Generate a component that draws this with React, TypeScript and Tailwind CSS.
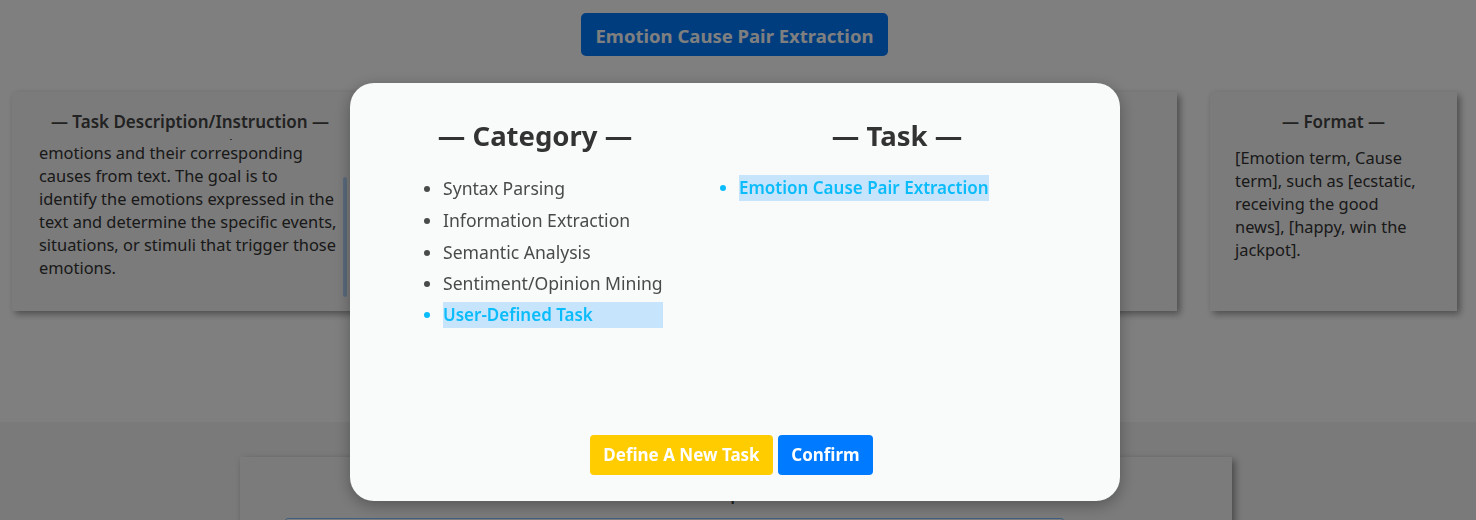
import React from 'react';

const categories = [
  'Syntax Parsing',
  'Information Extraction',
  'Semantic Analysis',
  'Sentiment/Opinion Mining',
  'User-Defined Task',
];

const tasks = ['Emotion Cause Pair Extraction'];

function ChoiceList({ items, selected }: { items: string[]; selected: string }) {
  return (
    <ul className="w-fit list-disc space-y-[5.75px] pl-[40px] text-[17.6px] leading-[26px]">
      {items.map((item) => (
        <li
          key={item}
          className={
            item === selected
              ? 'bg-[#c6e4fc] text-[17px] font-semibold text-[#0bbcfb]'
              : 'text-[#4a4a4a] marker:text-[#4a4a4a]'
          }
        >
          {item}
        </li>
      ))}
    </ul>
  );
}

export default function App() {
  return (
    <div className="relative min-h-screen bg-white font-['Noto_Sans',sans-serif] text-[#333]">
      <div className="flex justify-center pr-[7px] pt-[13px]">
        <button className="h-[43px] w-[307px] rounded-[5px] bg-[#007bff] pt-[3px] text-[18.5px] font-bold text-white">
          Emotion Cause Pair Extraction
        </button>
      </div>

      <div className="mt-[36px] flex gap-[33px] pl-[12px]">
        <div className="h-[219px] w-[356px] bg-[#f6f6f6] pt-[18px] shadow-[3px_3px_7px_rgba(0,0,0,0.4)]">
          <h3 className="text-center text-[17px] font-semibold leading-[24px] text-[#444]">
            — Task Description/Instruction —
          </h3>
          <div className="mt-[5px] flex h-[159px] overflow-hidden pl-[27px] pr-[21px]">
            <p className="-mt-[21px] w-[299px] shrink-0 text-[16.4px] leading-[23px] text-[#333]">
              This task aims to extract pairs of emotions and their corresponding causes from text. The goal is to
              identify the emotions expressed in the text and determine the specific events, situations, or stimuli
              that trigger those emotions.
            </p>
            <div className="ml-auto mt-[38px] h-[120px] w-[4px] rounded-full bg-[#b3d4f6]" />
          </div>
        </div>

        <div className="h-[219px] w-[776px] bg-[#f6f6f6] shadow-[3px_3px_7px_rgba(0,0,0,0.4)]" />

        <div className="h-[219px] w-[247px] bg-[#f6f6f6] px-[25px] pt-[18px] shadow-[3px_3px_7px_rgba(0,0,0,0.4)]">
          <h3 className="text-center text-[17px] font-semibold leading-[24px] text-[#444]">— Format —</h3>
          <p className="mt-[12px] w-[190px] text-[16.4px] leading-[23px] text-[#333]">
            [Emotion term, Cause term], such as [ecstatic, receiving the good news], [happy, win the jackpot].
          </p>
        </div>
      </div>

      <div className="mt-[111px] h-[98px] bg-[#f4f4f4] pl-[240px] pt-[35px]">
        <div className="h-[120px] w-[992px] bg-[#f6f6f6] pt-[25px] shadow-[3px_3px_7px_rgba(0,0,0,0.4)]">
          <h3 className="text-center text-[17px] font-semibold leading-[24px] text-[#444]">— Input —</h3>
          <div className="ml-[45px] mt-[12px] h-[40px] w-[779px] rounded-[3px] border border-[#80bdff] bg-white" />
        </div>
      </div>

      <div className="fixed inset-0 bg-black/50 pl-[350px] pt-[83px]">
        <div className="flex h-[418px] w-[770px] flex-col rounded-[24px] bg-[#f9fbfb] pb-[26px] pt-[35px] shadow-[0_4px_16px_rgba(0,0,0,0.3)]">
          <div className="flex gap-[32px] pl-[53px]">
            <div className="w-[264px]">
              <h2 className="text-center text-[27.5px] font-bold leading-[36px] text-[#333]">— Category —</h2>
              <div className="mt-[21px]">
                <ChoiceList items={categories} selected="User-Defined Task" />
              </div>
            </div>
            <div className="w-[396px]">
              <h2 className="text-center text-[27.5px] font-bold leading-[36px] text-[#333]">— Task —</h2>
              <div className="mt-[21px]">
                <ChoiceList items={tasks} selected="Emotion Cause Pair Extraction" />
              </div>
            </div>
          </div>

          <div className="mt-auto flex gap-[5px] pl-[240px]">
            <button className="h-[40px] w-[183px] rounded-[4px] bg-[#ffcc00] text-[17px] font-bold text-white">
              Define A New Task
            </button>
            <button className="h-[40px] w-[95px] rounded-[4px] bg-[#007bff] text-[17px] font-bold text-white">
              Confirm
            </button>
          </div>
        </div>
      </div>
    </div>
  );
}
